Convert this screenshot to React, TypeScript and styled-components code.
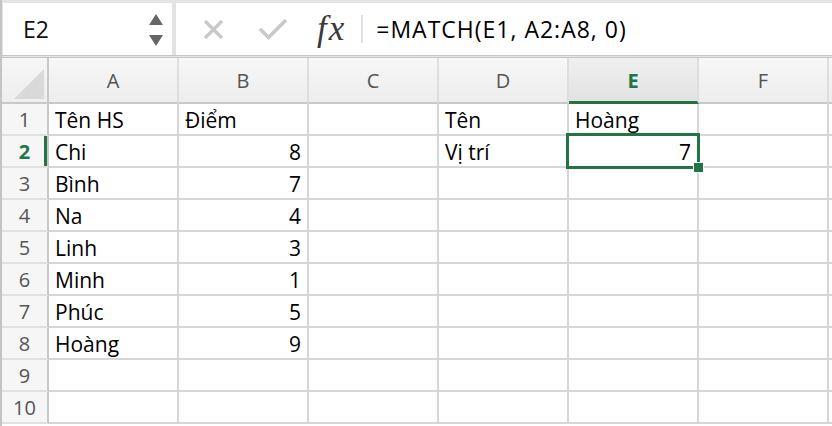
import React from "react";
import styled, { createGlobalStyle } from "styled-components";

const GREEN = "#227447";
const GRID = "#d6d6d6";
const FONT = `"Open Sans", "Noto Sans", sans-serif`;

const Global = createGlobalStyle`
  html, body { margin: 0; padding: 0; background: #ffffff; overflow: hidden; }
  body { font-family: ${FONT}; }
`;

const Page = styled.div`
  width: 832px;
  height: 426px;
  display: flex;
  flex-direction: column;
  border-left: 2px solid #c4c4c4;
  box-sizing: border-box;
  background: #fff;
`;

const Toolbar = styled.div`
  height: 58px;
  box-sizing: border-box;
  display: flex;
  padding: 3px 0 0 1px;
  background: #e4e4e4;
  border-bottom: 3px double #c6c6c6;
`;

const NameBox = styled.div`
  width: 169px;
  background: #fff;
  display: flex;
  align-items: center;
  justify-content: space-between;
  padding: 0 9px 0 20px;
  box-sizing: border-box;
  font-size: 23px;
  color: #111;
`;

const Spinner = styled.div`
  display: flex;
  flex-direction: column;
  gap: 10px;
  margin-top: 2px;
`;

const Divider = styled.div`
  width: 4px;
  background: #e2e2e2;
`;

const FormulaArea = styled.div`
  flex: 1;
  background: #fff;
  display: flex;
  align-items: center;
  padding-left: 26px;
`;

const IconSlot = styled.div<{ $w: number; $ml?: number }>`
  width: ${(p) => p.$w}px;
  margin-left: ${(p) => p.$ml ?? 0}px;
  display: flex;
  align-items: center;
  justify-content: center;
`;

const Fx = styled.span`
  font-family: "Liberation Serif", "DejaVu Serif", serif;
  font-style: italic;
  font-size: 35px;
  line-height: 1;
  color: #3a3a3a;
  margin-left: 29px;
  letter-spacing: 2px;
  margin-top: -2px;
`;

const Sep = styled.div`
  width: 2px;
  height: 28px;
  background: #e0e0e0;
  margin: 0 13px 0 15px;
`;

const Formula = styled.span`
  font-size: 23px;
  color: #000;
  letter-spacing: 1px;
`;

const Sheet = styled.div`
  display: grid;
  grid-template-columns: 47px repeat(6, 130px) 1fr;
  grid-template-rows: 46px repeat(10, 32px);
`;

const Corner = styled.div`
  background: linear-gradient(#f6f6f6, #eeeeee);
  border-right: 2px solid #c8c8c8;
  border-bottom: 2px solid #c8c8c8;
  display: flex;
  align-items: flex-end;
  justify-content: flex-end;
  padding: 0 3px 3px 0;
`;

const ColHead = styled.div<{ $active?: boolean }>`
  background: ${(p) => (p.$active ? "linear-gradient(#f0f0f0, #e2e2e2)" : "linear-gradient(#f7f7f7, #ededed)")};
  border-right: 2px solid #dedede;
  border-bottom: ${(p) => (p.$active ? `3px solid ${GREEN}` : "2px solid #c8c8c8")};
  display: flex;
  align-items: center;
  justify-content: center;
  font-size: 20px;
  font-weight: ${(p) => (p.$active ? 700 : 400)};
  color: ${(p) => (p.$active ? GREEN : "#555")};
  padding-top: ${(p) => (p.$active ? "2px" : "1px")};
`;

const RowHead = styled.div<{ $active?: boolean }>`
  background: #f6f6f6;
  border-right: 2px solid #c8c8c8;
  border-bottom: 2px solid #e0e0e0;
  display: flex;
  align-items: flex-end;
  justify-content: center;
  font-size: 20px;
  line-height: 28px;
  font-weight: ${(p) => (p.$active ? 700 : 400)};
  color: ${(p) => (p.$active ? GREEN : "#555")};
  box-shadow: ${(p) => (p.$active ? `inset -3px 0 0 ${GREEN}` : "none")};
`;

const Cell = styled.div<{ $num?: boolean; $top?: boolean }>`
  position: relative;
  z-index: ${(p) => (p.$top ? 2 : "auto")};
  border-right: 2px solid ${GRID};
  border-bottom: 2px solid ${GRID};
  display: flex;
  align-items: flex-end;
  justify-content: ${(p) => (p.$num ? "flex-end" : "flex-start")};
  padding: 0 6px 0 6px;
  font-size: 21px;
  line-height: 28px;
  color: #000;
  white-space: nowrap;
  min-width: 0;
`;

const Selection = styled.div`
  position: absolute;
  left: -3px;
  top: -3px;
  right: -3px;
  bottom: -3px;
  border: 3px solid ${GREEN};
  pointer-events: none;
`;

const Handle = styled.div`
  position: absolute;
  right: -7px;
  bottom: -7px;
  width: 9px;
  height: 9px;
  background: ${GREEN};
  border: 1px solid #fff;
`;

const cols = ["A", "B", "C", "D", "E", "F"];

type Row = (string | number | null)[];
const data: Row[] = [
  ["Tên HS", "Điểm", null, "Tên", "Hoàng", null],
  ["Chi", 8, null, "Vị trí", 7, null],
  ["Bình", 7, null, null, null, null],
  ["Na", 4, null, null, null, null],
  ["Linh", 3, null, null, null, null],
  ["Minh", 1, null, null, null, null],
  ["Phúc", 5, null, null, null, null],
  ["Hoàng", 9, null, null, null, null],
  [null, null, null, null, null, null],
  [null, null, null, null, null, null],
];

export default function App() {
  return (
    <>
      <Global />
      <Page>
        <Toolbar>
          <NameBox>
            <span>E2</span>
            <Spinner>
              <svg width="14" height="11" viewBox="0 0 14 11">
                <path d="M7 0 L14 11 L0 11 Z" fill="#666" />
              </svg>
              <svg width="14" height="11" viewBox="0 0 14 11">
                <path d="M0 0 L14 0 L7 11 Z" fill="#666" />
              </svg>
            </Spinner>
          </NameBox>
          <Divider />
          <FormulaArea>
            <IconSlot $w={22}>
              <svg width="21" height="19" viewBox="0 0 21 19">
                <path d="M2 1 L19 18 M19 1 L2 18" stroke="#c9c9c9" strokeWidth="3.4" fill="none" />
              </svg>
            </IconSlot>
            <IconSlot $w={30} $ml={34}>
              <svg width="30" height="23" viewBox="0 0 30 23">
                <path d="M2 11 L10.5 19.5 L28 2" stroke="#c9c9c9" strokeWidth="3.6" fill="none" />
              </svg>
            </IconSlot>
            <Fx>fx</Fx>
            <Sep />
            <Formula>=MATCH(E1, A2:A8, 0)</Formula>
          </FormulaArea>
        </Toolbar>
        <Sheet>
          <Corner>
            <svg width="30" height="30" viewBox="0 0 30 30">
              <path d="M30 0 L30 30 L0 30 Z" fill="#d9d9d9" />
            </svg>
          </Corner>
          {cols.map((c) => (
            <ColHead key={c} $active={c === "E"}>
              {c}
            </ColHead>
          ))}
          <ColHead />
          {data.map((row, r) => (
            <React.Fragment key={r}>
              <RowHead $active={r === 1}>{r + 1}</RowHead>
              {row.map((v, ci) => {
                const selected = r === 1 && ci === 4;
                return (
                  <Cell key={ci} $num={typeof v === "number"} $top={selected}>
                    {v}
                    {selected && (
                      <Selection>
                        <Handle />
                      </Selection>
                    )}
                  </Cell>
                );
              })}
              <Cell />
            </React.Fragment>
          ))}
        </Sheet>
      </Page>
    </>
  );
}
